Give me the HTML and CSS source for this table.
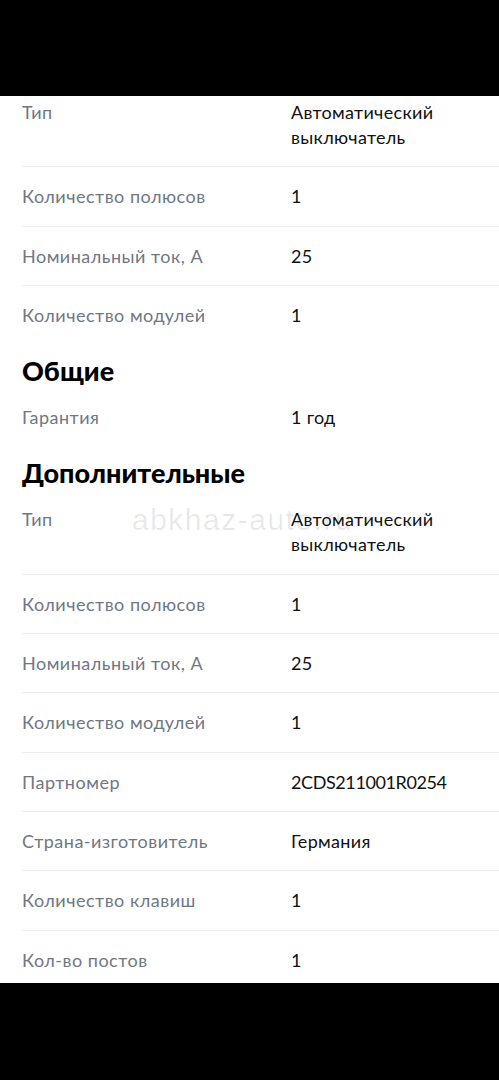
FILE: index.html
```html
<!DOCTYPE html>
<html lang="ru">
<head>
<meta charset="utf-8">
<link rel="stylesheet" href="styles.css">
</head>
<body>
<div class="bar bar-top"></div>
<main class="content">
  <section class="group group-first">
    <div class="row"><div class="label">Тип</div><div class="value">Автоматический<br>выключатель</div></div>
    <div class="row"><div class="label">Количество полюсов</div><div class="value">1</div></div>
    <div class="row"><div class="label">Номинальный ток, А</div><div class="value">25</div></div>
    <div class="row"><div class="label">Количество модулей</div><div class="value">1</div></div>
  </section>
  <section class="group">
    <h2 class="heading">Общие</h2>
    <div class="row"><div class="label">Гарантия</div><div class="value">1 год</div></div>
  </section>
  <section class="group">
    <h2 class="heading">Дополнительные</h2>
    <div class="watermark">abkhaz-auto.ru</div>
    <div class="row"><div class="label">Тип</div><div class="value">Автоматический<br>выключатель</div></div>
    <div class="row"><div class="label">Количество полюсов</div><div class="value">1</div></div>
    <div class="row"><div class="label">Номинальный ток, А</div><div class="value">25</div></div>
    <div class="row"><div class="label">Количество модулей</div><div class="value">1</div></div>
    <div class="row"><div class="label">Партномер</div><div class="value value-code">2CDS211001R0254</div></div>
    <div class="row"><div class="label">Страна-изготовитель</div><div class="value">Германия</div></div>
    <div class="row"><div class="label">Количество клавиш</div><div class="value">1</div></div>
    <div class="row"><div class="label">Кол-во постов</div><div class="value">1</div></div>
  </section>
</main>
<div class="bar bar-bottom"></div>
</body>
</html>
```
FILE: styles.css
```css
* { box-sizing: border-box; }
html, body { margin: 0; padding: 0; background: #000; }
body {
  width: 499px;
  height: 1080px;
  overflow: hidden;
  display: flex;
  flex-direction: column;
  font-family: "Lato", "Noto Sans", sans-serif;
}
.bar-top { height: 96px; background: #000; flex: none; }
.bar-bottom { flex: 1; background: #000; }
.content {
  background: #fff;
  height: 887px;
  flex: none;
  overflow: hidden;
  padding-left: 22px;
}
.group { position: relative; }
.group-first .row:first-child { padding-top: 4px; }
.heading {
  margin: 10px 0 0 0;
  font-size: 27px;
  line-height: 34px;
  font-weight: 900;
  color: #000;
}
.row {
  position: relative;
  display: flex;
  padding: 17px 0 16.3px 0;
  border-bottom: 1px solid #ececec;
  font-size: 18px;
  line-height: 25px;
}
.row:last-child { border-bottom: none; }
.label {
  width: 269px;
  flex: none;
  color: #6f7784;
  letter-spacing: 0.5px;
}
.value { color: #111; letter-spacing: 0.3px; }
.value-code { letter-spacing: -0.4px; }
.watermark {
  position: absolute;
  left: 110px;
  top: 47px;
  font-family: "Liberation Sans", Arial, sans-serif;
  font-size: 30px;
  letter-spacing: 1.5px;
  color: rgba(0,0,0,0.09);
  pointer-events: none;
}
```
